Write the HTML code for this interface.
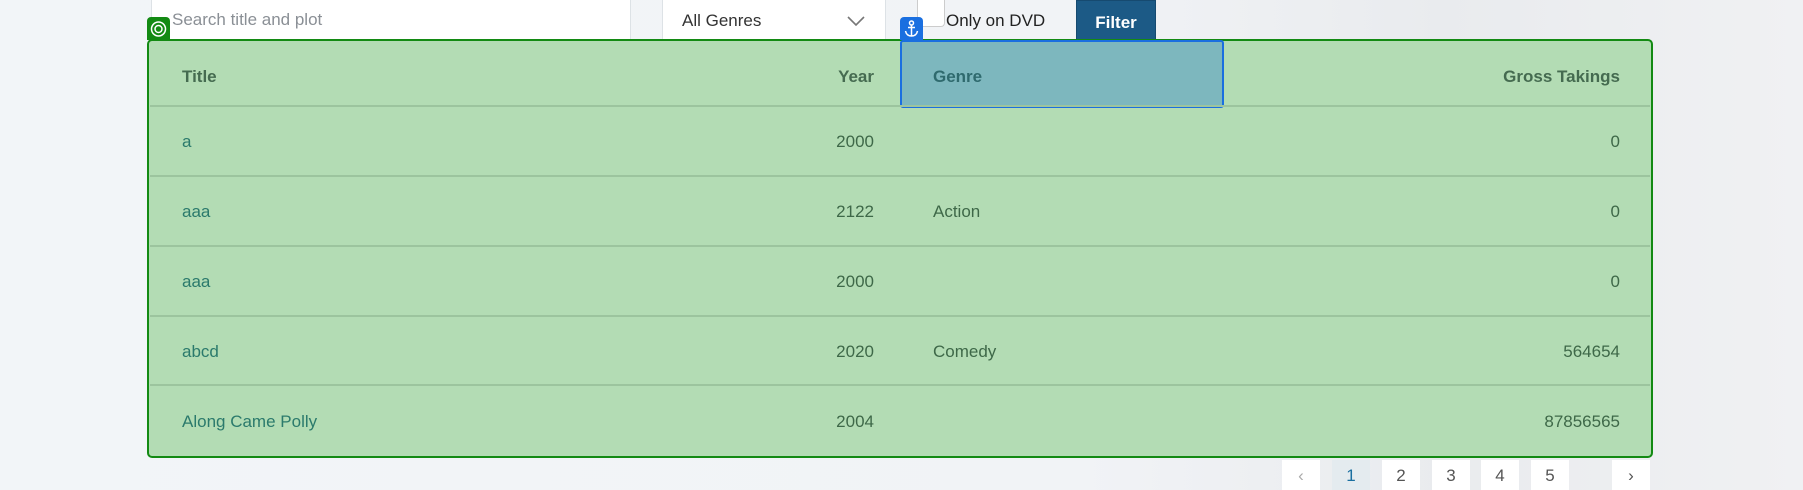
<!DOCTYPE html>
<html><head><style>
body{margin:0;width:1803px;height:480px;overflow:hidden;background:linear-gradient(90deg,#f2f5f8 0%,#f1f3f6 60%,#e9ebee 80%,#f0f1f3 100%);font-family:"Liberation Sans",sans-serif;font-size:17px;position:relative}
.a{position:absolute}
.inp{background:#fff;border:1px solid #dde2e6;border-top:none;box-sizing:border-box}
.box{left:147px;top:39px;width:1506px;height:419px;background:#b3dcb4;border:2.5px solid #138a13;border-radius:5px;box-sizing:border-box}
.line{position:absolute;left:150px;width:1500px;height:1.5px;background:#9cc49e}
.th{color:#456b50;font-weight:bold;top:67px}
.td{color:#3e6848}
.tl{color:#2b7a6c}
.pg{top:460px;height:30px;width:38px;background:#fff;text-align:center;color:#555;padding-top:6px;box-sizing:border-box}
</style></head><body>
<div class="a inp" style="left:151px;top:0;width:480px;height:44px"></div>
<div class="a" style="left:172px;top:10px;color:#8a8f95">Search title and plot</div>
<div class="a inp" style="left:662px;top:0;width:224px;height:44px"></div>
<div class="a" style="left:682px;top:11px;color:#333">All Genres</div>
<svg class="a" style="left:847px;top:15px" width="18" height="12"><path d="M1 2 L9 10 L17 2" fill="none" stroke="#777" stroke-width="1.6"/></svg>
<div class="a" style="left:917px;top:0;width:28px;height:27px;background:#fff;border:1px solid #ccc;border-top:none;border-radius:0 0 4px 4px;box-sizing:border-box"></div>
<div class="a" style="left:946px;top:11px;color:#222">Only on DVD</div>
<div class="a" style="left:1076px;top:0;width:80px;height:45px;background:#1c5a86;border:1px solid #164a70;border-radius:0 0 4px 4px;box-sizing:border-box;color:#fff;font-weight:bold;text-align:center;padding-top:12px">Filter</div>

<div class="a box"></div>
<div class="a" style="left:900px;top:40px;width:324px;height:68px;background:#7db7be;border:2.5px solid #1a6fe0;border-radius:3px;box-sizing:border-box"></div>
<div class="a" style="left:147px;top:17px;width:23px;height:23px;background:#138a13;border-radius:4px 4px 0 0"><svg width="23" height="23"><circle cx="11.5" cy="12" r="7" fill="none" stroke="#fff" stroke-width="1.5"/><circle cx="11.5" cy="12" r="3.5" fill="none" stroke="#fff" stroke-width="1.5"/></svg></div>
<div class="a" style="left:900px;top:17px;width:23px;height:23px;background:#1a6fe0;border-radius:4px 4px 0 0"><svg width="23" height="23" fill="none" stroke="#fff" stroke-width="1.5"><circle cx="11.5" cy="6" r="2"/><path d="M11.5 8 V19 M8 10.5 H15 M5.5 14 Q6.5 19 11.5 19 Q16.5 19 17.5 14"/></svg></div>

<div class="line" style="top:105px"></div>
<div class="line" style="top:175px"></div>
<div class="line" style="top:245px"></div>
<div class="line" style="top:315px"></div>
<div class="line" style="top:384px"></div>

<div class="a th" style="left:182px">Title</div>
<div class="a th" style="right:929px">Year</div>
<div class="a th" style="left:933px;color:#2f6a6e">Genre</div>
<div class="a th" style="right:183px">Gross Takings</div>

<div class="a tl" style="left:182px;top:132px">a</div>
<div class="a td" style="right:929px;top:132px">2000</div>
<div class="a td" style="right:183px;top:132px">0</div>

<div class="a tl" style="left:182px;top:202px">aaa</div>
<div class="a td" style="right:929px;top:202px">2122</div>
<div class="a td" style="left:933px;top:202px">Action</div>
<div class="a td" style="right:183px;top:202px">0</div>

<div class="a tl" style="left:182px;top:272px">aaa</div>
<div class="a td" style="right:929px;top:272px">2000</div>
<div class="a td" style="right:183px;top:272px">0</div>

<div class="a tl" style="left:182px;top:342px">abcd</div>
<div class="a td" style="right:929px;top:342px">2020</div>
<div class="a td" style="left:933px;top:342px">Comedy</div>
<div class="a td" style="right:183px;top:342px">564654</div>

<div class="a tl" style="left:182px;top:412px">Along Came Polly</div>
<div class="a td" style="right:929px;top:412px">2004</div>
<div class="a td" style="right:183px;top:412px">87856565</div>

<div class="a pg" style="left:1282px;color:#aaa">‹</div>
<div class="a pg" style="left:1332px;background:#e4ebef;color:#1a6fa0">1</div>
<div class="a pg" style="left:1382px">2</div>
<div class="a pg" style="left:1432px">3</div>
<div class="a pg" style="left:1481px">4</div>
<div class="a pg" style="left:1531px">5</div>
<div class="a pg" style="left:1612px">›</div>
</body></html>
